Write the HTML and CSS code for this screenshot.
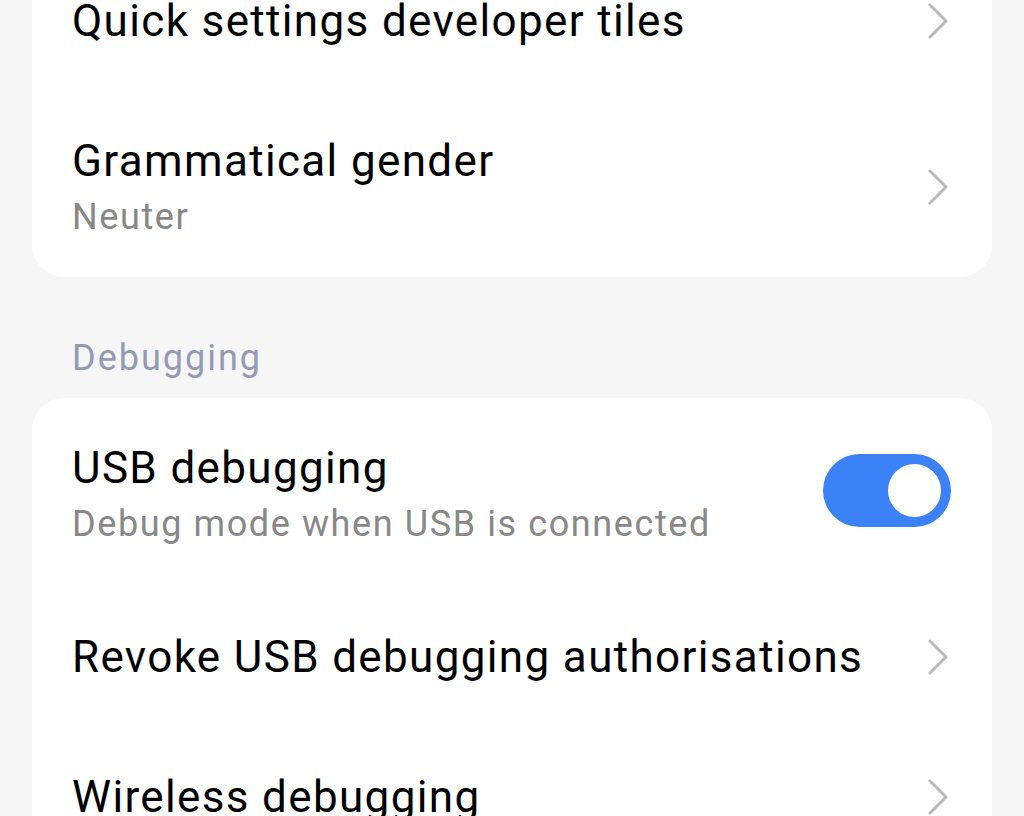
FILE: index.html
```html
<!DOCTYPE html>
<html lang="en">
  <head>
    <meta charset="UTF-8" />
    <meta name="viewport" content="width=device-width, initial-scale=1.0" />
    <title>Developer options</title>
    <link rel="stylesheet" href="styles.css">
  </head>
  <body>
    <div class="page">
      <div class="card">
        <div class="row">
          <div class="text">
            <div class="title">Quick settings developer tiles</div>
          </div>
          <svg class="chevron" viewBox="0 0 20 36"><polyline points="2,2 18,18 2,34" /></svg>
        </div>
        <div class="row two-line">
          <div class="text">
            <div class="title">Grammatical gender</div>
            <div class="summary">Neuter</div>
          </div>
          <svg class="chevron" viewBox="0 0 20 36"><polyline points="2,2 18,18 2,34" /></svg>
        </div>
      </div>

      <div class="section-header">Debugging</div>

      <div class="card">
        <div class="row two-line">
          <div class="text">
            <div class="title">USB debugging</div>
            <div class="summary">Debug mode when USB is connected</div>
          </div>
          <div class="switch on"><div class="knob"></div></div>
        </div>
        <div class="row">
          <div class="text">
            <div class="title">Revoke USB debugging authorisations</div>
          </div>
          <svg class="chevron" viewBox="0 0 20 36"><polyline points="2,2 18,18 2,34" /></svg>
        </div>
        <div class="row">
          <div class="text">
            <div class="title">Wireless debugging</div>
          </div>
          <svg class="chevron" viewBox="0 0 20 36"><polyline points="2,2 18,18 2,34" /></svg>
        </div>
      </div>
    </div>
  </body>
</html>
```

FILE: styles.css
```css
html {
  height: 100%;
}
body {
  margin: 0;
  height: 100%;
  overflow: hidden;
  background: #f6f6f6;
  font-family: Roboto, "Noto Sans", sans-serif;
  color: #000;
}

/* list is scrolled, first row sits partly above the top edge */
.page {
  margin-top: -49px;
  padding: 0 32px;
}

.card {
  background: #fff;
  border-radius: 32px;
  padding: 0 44px 0 40px;
}

.row {
  display: flex;
  align-items: center;
  justify-content: space-between;
  padding: 44px 0;
}

.row.two-line {
  padding-bottom: 41px;
}

.row.two-line:last-child {
  padding-bottom: 38px;
}

.text {
  flex: 1;
  min-width: 0;
}

.title {
  font-size: 44px;
  line-height: 52px;
  letter-spacing: 1.35px;
}

.summary {
  margin-top: 8px;
  font-size: 36px;
  line-height: 44px;
  letter-spacing: 1.6px;
  color: #888;
}

.chevron {
  width: 20px;
  height: 36px;
  flex: none;
}

.chevron polyline {
  fill: none;
  stroke: #b9b9b9;
  stroke-width: 3;
  stroke-linecap: round;
  stroke-linejoin: round;
}

.section-header {
  padding: 59px 0 18px 40px;
  font-size: 36px;
  line-height: 44px;
  letter-spacing: 2px;
  color: #949ab3;
}

.switch {
  flex: none;
  width: 128px;
  height: 73px;
  margin-right: -3px;
  margin-bottom: 8px;
  border-radius: 37px;
  background: #3a82f6;
  display: flex;
  align-items: center;
  justify-content: flex-end;
  padding-right: 10px;
  box-sizing: border-box;
}

.knob {
  width: 53px;
  height: 53px;
  border-radius: 50%;
  background: #fff;
}
```
